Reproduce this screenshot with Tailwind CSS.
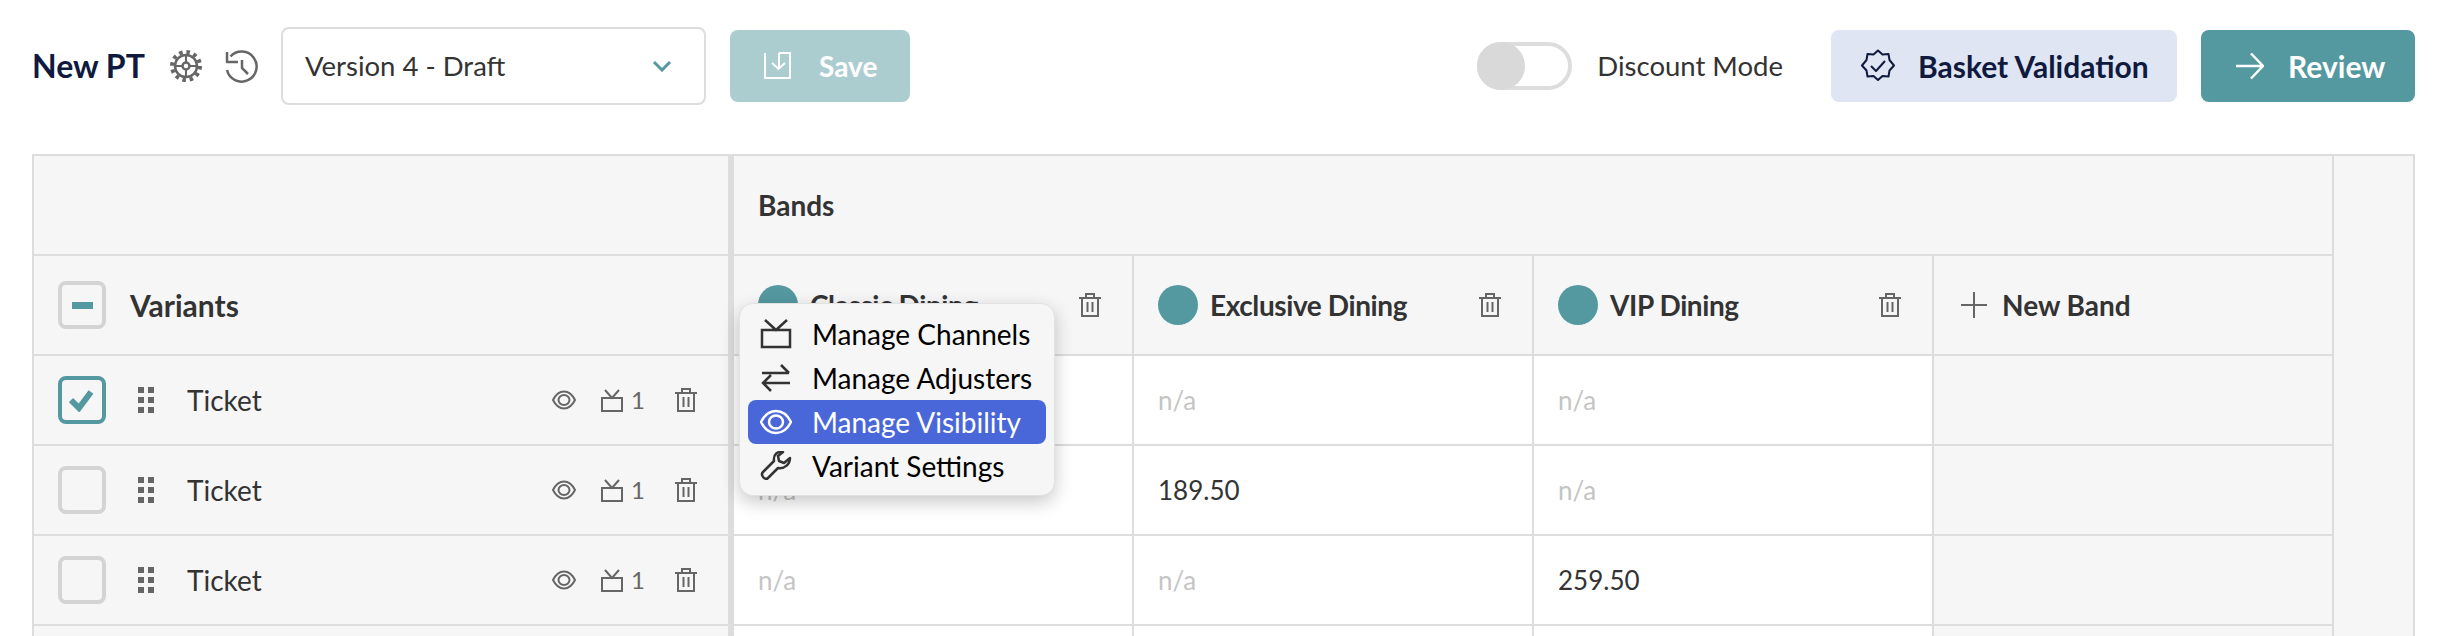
<!DOCTYPE html>
<html>
<head>
<meta charset="utf-8">
<script src="https://cdn.jsdelivr.net/npm/@tailwindcss/browser@4"></script>
</head>
<body class="bg-white font-['Lato',sans-serif] text-[#333] overflow-hidden">
<div class="w-[2452px] h-[636px] px-8 pt-[27px] overflow-hidden">
  <!-- toolbar -->
  <header class="flex items-center w-[2383px] h-[78px]">
    <h1 class="w-[113px] whitespace-nowrap text-[32px] font-bold text-[#0f1a3e]">New PT</h1>
    <svg class="ml-6 shrink-0" width="34" height="34" viewBox="0 0 34 34" fill="none" stroke="#666">
      <circle cx="17" cy="17" r="11" stroke-width="2.5"/>
      <circle cx="17" cy="17" r="14" stroke-width="4" stroke-dasharray="3.5 3.83"/>
      <circle cx="17" cy="17" r="3.5" stroke-width="2.5"/>
      <path d="M17 6v7.5M17 20.5V28M6 17h7.5M20.500 17H28" stroke-width="2"/>
    </svg>
    <svg class="ml-[21px] shrink-0" width="36" height="34" viewBox="0 0 36 34" fill="none" stroke="#666" stroke-width="2.500">
      <path d="M6.500 7.500A15 15 0 1 1 3 21"/>
      <path d="M3 3v10h11" stroke-linejoin="round"/>
      <path d="M18 11v8l6 6"/>
    </svg>
    <div class="ml-[21px] w-[425px] h-[78px] shrink-0 flex items-center justify-between pl-[22px] pr-[32px] rounded-lg border-2 border-[#ddd] text-[27.5px]">
      <span>Version 4 - Draft</span>
      <svg width="20" height="12" viewBox="0 0 20 12" fill="none" stroke="#5498a0" stroke-width="3"><path d="M2 2l8 8 8-8"/></svg>
    </div>
    <button class="ml-6 w-[180px] h-[72px] shrink-0 flex items-center pl-[33px] rounded-lg bg-[#accdd0] text-white text-[28px] font-bold">
      <svg width="28" height="28" viewBox="0 0 28 28" fill="none" stroke="#fff" stroke-width="2"><path d="M2 1v25h25V1H16"/><path d="M16 1v15M9 11l6.500 6 6.500-6"/></svg>
      <span class="ml-[28px]">Save</span>
    </button>
    <div class="ml-auto w-[95px] h-[48px] shrink-0 rounded-full border-4 border-[#ddd] bg-white relative">
      <div class="absolute -left-1 -top-1 size-12 rounded-full bg-[#d9d9d9]"></div>
    </div>
    <span class="ml-[25px] text-[27.5px] whitespace-nowrap">Discount Mode</span>
    <button class="ml-[48px] w-[346px] h-[72px] shrink-0 flex items-center pl-[30px] rounded-lg bg-[#e0e5f3] text-[#0f1a3e] text-[30px] font-bold">
      <svg width="34" height="34" viewBox="0 0 34 34" fill="none" stroke="#0f1a3e" stroke-width="2" stroke-linejoin="round"><path d="M17 1.500l4.500 4 6-.5 1 6 4.500 5.500-4.500 5-1 6-6-.5-4.500 4-4.500-4-6 .5-1-6-4.500-5 4.500-5.500 1-6 6 .5z"/><path d="M10 17l5 5 9-10"/></svg>
      <span class="ml-[23px] whitespace-nowrap">Basket Validation</span>
    </button>
    <button class="ml-6 w-[214px] h-[72px] shrink-0 flex items-center pl-[35px] rounded-lg bg-[#5498a0] text-white text-[30px] font-bold">
      <svg width="28" height="28" viewBox="0 0 28 28" fill="none" stroke="#fff" stroke-width="2.500"><path d="M0 14h27M15 1.500L27 14 15 26.500"/></svg>
      <span class="ml-[24px]">Review</span>
    </button>
  </header>

  <!-- table -->
  <div class="relative mt-[49px] w-[2383px] h-[482px] border-2 border-b-0 border-[#ddd] bg-[#f6f6f6] flex overflow-hidden">
    <div class="w-[2300px] shrink-0 text-[26px]">
      <div class="flex h-[100px] border-b-2 border-[#ddd]">
        <div class="w-[700px] border-r-[6px] border-[#ddd]"></div>
        <div class="w-[1600px] border-r-2 border-[#ddd] flex items-center pl-6 text-[28px] font-bold">Bands</div>
      </div>
      <div class="flex h-[100px] border-b-2 border-[#ddd]">
        <div class="w-[700px] border-r-[6px] border-[#ddd] flex items-center pl-6">
          <div class="size-12 rounded-lg border-4 border-[#d4d4d4] flex items-center justify-center"><div class="w-[21px] h-[7px] bg-[#5498a0]"></div></div>
          <span class="ml-[24px] text-[30px] font-bold">Variants</span>
        </div>
        <div class="w-[400px] border-r-2 border-[#ddd] flex items-center pl-6 pr-[31px]">
          <div class="size-10 rounded-full bg-[#5498a0] shrink-0"></div>
          <span class="ml-3 text-[28px] tracking-[-0.4px] font-bold">Classic Dining</span>
          <svg class="ml-auto" width="22" height="24" viewBox="0 0 22 24" fill="none" stroke="#666" stroke-width="2"><path d="M0 5h22M7 5V1h8v4M3 5v18h16V5M8.500 9v10M13.500 9v10"/></svg>
        </div>
        <div class="w-[400px] border-r-2 border-[#ddd] flex items-center pl-6 pr-[31px]">
          <div class="size-10 rounded-full bg-[#5498a0] shrink-0"></div>
          <span class="ml-3 text-[28px] tracking-[-0.4px] font-bold">Exclusive Dining</span>
          <svg class="ml-auto" width="22" height="24" viewBox="0 0 22 24" fill="none" stroke="#666" stroke-width="2"><path d="M0 5h22M7 5V1h8v4M3 5v18h16V5M8.500 9v10M13.500 9v10"/></svg>
        </div>
        <div class="w-[400px] border-r-2 border-[#ddd] flex items-center pl-6 pr-[31px]">
          <div class="size-10 rounded-full bg-[#5498a0] shrink-0"></div>
          <span class="ml-3 text-[28px] tracking-[-0.4px] font-bold">VIP Dining</span>
          <svg class="ml-auto" width="22" height="24" viewBox="0 0 22 24" fill="none" stroke="#666" stroke-width="2"><path d="M0 5h22M7 5V1h8v4M3 5v18h16V5M8.500 9v10M13.500 9v10"/></svg>
        </div>
        <div class="w-[400px] border-r-2 border-[#ddd] flex items-center pl-[26px]">
          <svg width="28" height="28" viewBox="0 0 28 28" fill="none" stroke="#666" stroke-width="2"><path d="M14 1v26M1 14h26"/></svg>
          <span class="ml-[14px] text-[28px] font-bold">New Band</span>
        </div>
      </div>

      <!-- row 1 -->
      <div class="flex h-[90px] border-b-2 border-[#ddd]">
        <div class="w-[700px] border-r-[6px] border-[#ddd] flex items-center pl-6 pr-[31px]">
          <div class="size-12 rounded-lg border-4 border-[#5498a0] flex items-center justify-center">
            <svg width="26" height="24" viewBox="0 0 26 24" fill="none" stroke="#5498a0" stroke-width="6"><path d="M2 12l8 8L22 4"/></svg>
          </div>
          <div class="ml-8 grid grid-cols-2 gap-x-1 gap-y-1 w-4"><i class="size-[6px] bg-[#666]"></i><i class="size-[6px] bg-[#666]"></i><i class="size-[6px] bg-[#666]"></i><i class="size-[6px] bg-[#666]"></i><i class="size-[6px] bg-[#666]"></i><i class="size-[6px] bg-[#666]"></i></div>
          <span class="ml-[33px] text-[28px]">Ticket</span>
          <svg class="ml-auto" width="24" height="20" viewBox="0 0 24 20" fill="none" stroke="#666" stroke-width="2"><path d="M1 10C4 4 8 1.500 12 1.500S20 4 23 10c-3 6-7 8.500-11 8.500S4 16 1 10z"/><ellipse cx="12" cy="10" rx="5.500" ry="5"/></svg>
          <svg class="ml-[25px]" width="22" height="23" viewBox="0 0 22 23" fill="none" stroke="#666" stroke-width="2"><path d="M1 9h20v13H1zM4 1l7 8 7-8"/></svg>
          <span class="ml-[8px] w-[12px] text-[#666] text-[24px]">1</span>
          <svg class="ml-8" width="22" height="24" viewBox="0 0 22 24" fill="none" stroke="#666" stroke-width="2"><path d="M0 5h22M7 5V1h8v4M3 5v18h16V5M8.500 9v10M13.500 9v10"/></svg>
        </div>
        <div class="w-[400px] border-r-2 border-[#ddd] bg-white flex items-center pl-6 text-[#c4c4c4]">n/a</div>
        <div class="w-[400px] border-r-2 border-[#ddd] bg-white flex items-center pl-6 text-[#c4c4c4]">n/a</div>
        <div class="w-[400px] border-r-2 border-[#ddd] bg-white flex items-center pl-6 text-[#c4c4c4]">n/a</div>
        <div class="w-[400px] border-r-2 border-[#ddd]"></div>
      </div>

      <!-- row 2 -->
      <div class="flex h-[90px] border-b-2 border-[#ddd]">
        <div class="w-[700px] border-r-[6px] border-[#ddd] flex items-center pl-6 pr-[31px]">
          <div class="size-12 rounded-lg border-4 border-[#d4d4d4]"></div>
          <div class="ml-8 grid grid-cols-2 gap-x-1 gap-y-1 w-4"><i class="size-[6px] bg-[#666]"></i><i class="size-[6px] bg-[#666]"></i><i class="size-[6px] bg-[#666]"></i><i class="size-[6px] bg-[#666]"></i><i class="size-[6px] bg-[#666]"></i><i class="size-[6px] bg-[#666]"></i></div>
          <span class="ml-[33px] text-[28px]">Ticket</span>
          <svg class="ml-auto" width="24" height="20" viewBox="0 0 24 20" fill="none" stroke="#666" stroke-width="2"><path d="M1 10C4 4 8 1.500 12 1.500S20 4 23 10c-3 6-7 8.500-11 8.500S4 16 1 10z"/><ellipse cx="12" cy="10" rx="5.500" ry="5"/></svg>
          <svg class="ml-[25px]" width="22" height="23" viewBox="0 0 22 23" fill="none" stroke="#666" stroke-width="2"><path d="M1 9h20v13H1zM4 1l7 8 7-8"/></svg>
          <span class="ml-[8px] w-[12px] text-[#666] text-[24px]">1</span>
          <svg class="ml-8" width="22" height="24" viewBox="0 0 22 24" fill="none" stroke="#666" stroke-width="2"><path d="M0 5h22M7 5V1h8v4M3 5v18h16V5M8.500 9v10M13.500 9v10"/></svg>
        </div>
        <div class="w-[400px] border-r-2 border-[#ddd] bg-white flex items-center pl-6 text-[#c4c4c4]">n/a</div>
        <div class="w-[400px] border-r-2 border-[#ddd] bg-white flex items-center pl-6">189.50</div>
        <div class="w-[400px] border-r-2 border-[#ddd] bg-white flex items-center pl-6 text-[#c4c4c4]">n/a</div>
        <div class="w-[400px] border-r-2 border-[#ddd]"></div>
      </div>

      <!-- row 3 -->
      <div class="flex h-[90px] border-b-2 border-[#ddd]">
        <div class="w-[700px] border-r-[6px] border-[#ddd] flex items-center pl-6 pr-[31px]">
          <div class="size-12 rounded-lg border-4 border-[#d4d4d4]"></div>
          <div class="ml-8 grid grid-cols-2 gap-x-1 gap-y-1 w-4"><i class="size-[6px] bg-[#666]"></i><i class="size-[6px] bg-[#666]"></i><i class="size-[6px] bg-[#666]"></i><i class="size-[6px] bg-[#666]"></i><i class="size-[6px] bg-[#666]"></i><i class="size-[6px] bg-[#666]"></i></div>
          <span class="ml-[33px] text-[28px]">Ticket</span>
          <svg class="ml-auto" width="24" height="20" viewBox="0 0 24 20" fill="none" stroke="#666" stroke-width="2"><path d="M1 10C4 4 8 1.500 12 1.500S20 4 23 10c-3 6-7 8.500-11 8.500S4 16 1 10z"/><ellipse cx="12" cy="10" rx="5.500" ry="5"/></svg>
          <svg class="ml-[25px]" width="22" height="23" viewBox="0 0 22 23" fill="none" stroke="#666" stroke-width="2"><path d="M1 9h20v13H1zM4 1l7 8 7-8"/></svg>
          <span class="ml-[8px] w-[12px] text-[#666] text-[24px]">1</span>
          <svg class="ml-8" width="22" height="24" viewBox="0 0 22 24" fill="none" stroke="#666" stroke-width="2"><path d="M0 5h22M7 5V1h8v4M3 5v18h16V5M8.500 9v10M13.500 9v10"/></svg>
        </div>
        <div class="w-[400px] border-r-2 border-[#ddd] bg-white flex items-center pl-6 text-[#c4c4c4]">n/a</div>
        <div class="w-[400px] border-r-2 border-[#ddd] bg-white flex items-center pl-6 text-[#c4c4c4]">n/a</div>
        <div class="w-[400px] border-r-2 border-[#ddd] bg-white flex items-center pl-6">259.50</div>
        <div class="w-[400px] border-r-2 border-[#ddd]"></div>
      </div>

      <!-- row 4, cut off by the window -->
      <div class="flex h-[90px]">
        <div class="w-[700px] border-r-[6px] border-[#ddd]"></div>
        <div class="w-[400px] border-r-2 border-[#ddd] bg-white"></div>
        <div class="w-[400px] border-r-2 border-[#ddd] bg-white"></div>
        <div class="w-[400px] border-r-2 border-[#ddd] bg-white"></div>
        <div class="w-[400px] border-r-2 border-[#ddd]"></div>
      </div>
    </div>
    <div class="flex-1"></div>

    <!-- context menu -->
    <div class="absolute left-[705px] top-[147px] w-[316px] h-[193px] rounded-[14px] border border-[#e2e2e2] bg-[#f6f6f6] shadow-[0_6px_18px_rgba(0,0,0,0.22)] px-2 pt-[8px] text-[28px] text-black">
      <div class="flex items-center h-[44px] rounded-lg pl-[12px]">
        <svg class="w-[32px] shrink-0" width="32" height="30" viewBox="0 0 32 30" fill="none" stroke="#333" stroke-width="2.500"><path d="M2 11h28v17H2zM5 1l11 10L27 1"/></svg>
        <span class="ml-[20px] whitespace-nowrap">Manage Channels</span>
      </div>
      <div class="flex items-center h-[44px] rounded-lg pl-[12px]">
        <svg class="w-[32px] shrink-0" width="32" height="30" viewBox="0 0 32 30" fill="none" stroke="#333" stroke-width="2.500"><path d="M2 10h27M21 2l8 8M30 20H3M11 12l-8 8 8 8"/></svg>
        <span class="ml-[20px] whitespace-nowrap">Manage Adjusters</span>
      </div>
      <div class="flex items-center h-[44px] rounded-lg pl-[12px] bg-[#4a67d9] text-white">
        <svg class="w-[32px] shrink-0" width="32" height="26" viewBox="0 0 32 26" fill="none" stroke="#fff" stroke-width="2.500"><path d="M1 13C5 5 10 2 16 2s11 3 15 11c-4 8-9 11-15 11S5 21 1 13z"/><ellipse cx="16" cy="13" rx="7" ry="6.500"/></svg>
        <span class="ml-[20px] whitespace-nowrap">Manage Visibility</span>
      </div>
      <div class="flex items-center h-[44px] rounded-lg pl-[12px]">
        <svg class="w-[32px] shrink-0" width="32" height="30" viewBox="0 0 32 30" fill="none" stroke="#333" stroke-width="2.500" stroke-linejoin="round"><path d="M30 7l-6 5-5-2-1-5 5-4c-5-1-10 2-9 9L3 21c-3 3 2 9 5 6l10-10c7 1 12-4 12-10z"/></svg>
        <span class="ml-[20px] whitespace-nowrap">Variant Settings</span>
      </div>
    </div>
  </div>
</div>
</body>
</html>
